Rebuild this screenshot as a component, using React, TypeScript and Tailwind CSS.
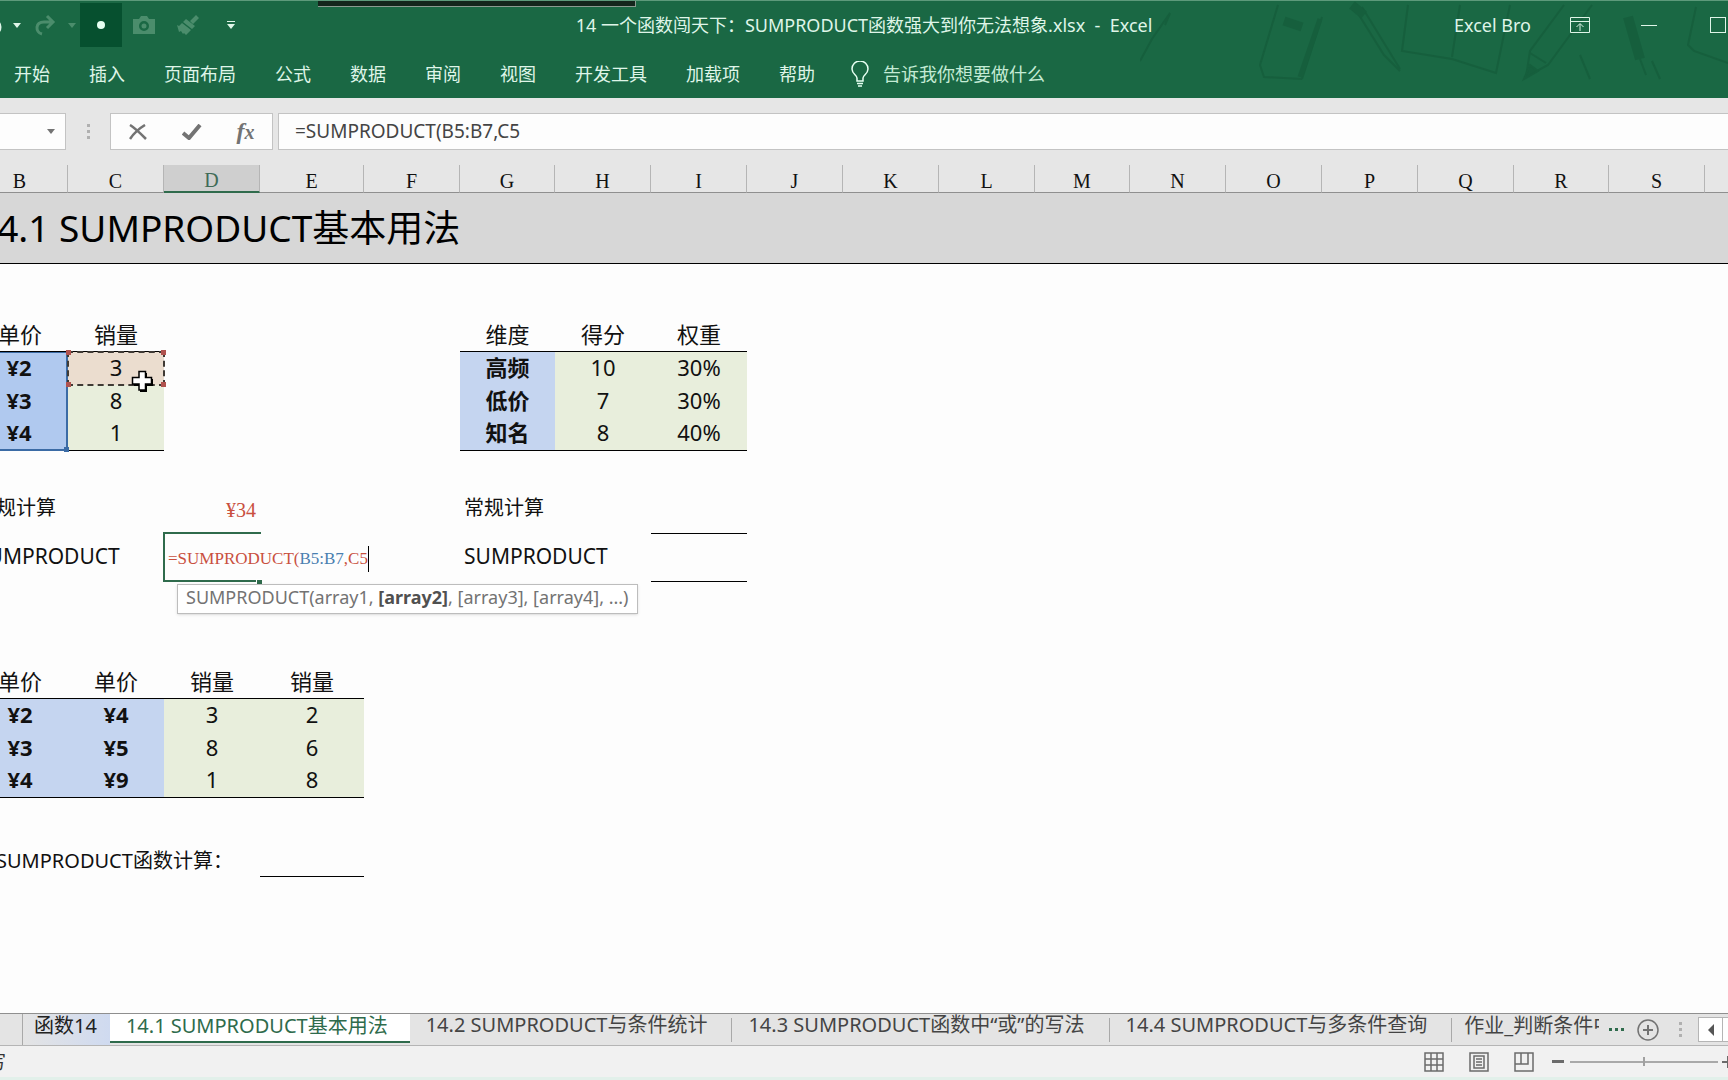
import { useState } from "react";
import type { ReactNode } from "react";
import clsx from "clsx";

const MENU = ["开始", "插入", "页面布局", "公式", "数据", "审阅", "视图", "开发工具", "加载项", "帮助"];

const COLUMNS = [
  { name: "B", width: "w-24" },
  { name: "C", width: "w-24" },
  { name: "D", width: "w-24" },
  { name: "E", width: "w-[104px]" },
  { name: "F", width: "w-24" },
  { name: "G", width: "w-[95px]" },
  { name: "H", width: "w-24" },
  { name: "I", width: "w-24" },
  { name: "J", width: "w-24" },
  { name: "K", width: "w-24" },
  { name: "L", width: "w-24" },
  { name: "M", width: "w-[95px]" },
  { name: "N", width: "w-24" },
  { name: "O", width: "w-24" },
  { name: "P", width: "w-24" },
  { name: "Q", width: "w-24" },
  { name: "R", width: "w-[95px]" },
  { name: "S", width: "w-24" },
];

const TABS = ["14.2 SUMPRODUCT与条件统计", "14.3 SUMPRODUCT函数中“或”的写法", "14.4 SUMPRODUCT与多条件查询"];

const BLUE = "bg-[#c5d5f0] font-bold";
const GREEN = "bg-[#e8eedc]";
const LINE = "border-b border-black";

function Caret({ className }: { className?: string }) {
  return (
    <svg viewBox="0 0 8 5" className={clsx("w-2 h-[5px]", className)} fill="currentColor">
      <path d="M0 0h8L4 5z" />
    </svg>
  );
}

function ToolButton({ label, className, children }: { label: string; className: string; children: ReactNode }) {
  return (
    <button aria-label={label} className={clsx("flex shrink-0 items-center justify-center", className)}>
      {children}
    </button>
  );
}

function Doodles() {
  return (
    <svg
      viewBox="0 0 588 98"
      className="pointer-events-none absolute right-0 top-0 h-[98px] w-[588px] opacity-60"
      fill="none"
      stroke="#145a39"
      strokeWidth="2"
    >
      <path d="M30 12l-18 26-12 22M30 12l-5 12" />
      <path d="M138 4l-18 60 4 12 38 2M182 16l-20 62" />
      <path d="M180 18l-20 58" strokeWidth="5" />
      <path d="M144 20l18 6" strokeWidth="9" />
      <path d="M222 6l38 62M214 6l30 48 16 16" />
      <path d="M212 4l12 10" strokeWidth="9" />
      <path d="M268 4l-6 46 50 8 44 14 14-68M320 4l-8 52" />
      <path d="M424 4l-34 46-4 26 22-12 44-60M390 52l16 10" />
      <path d="M384 78l6-14 8 6z" fill="#145a39" />
      <path d="M440 54l10 24" />
      <path d="M488 16l12 42" strokeWidth="10" />
      <path d="M500 58l6 16M512 60l8 18" />
      <path d="M556 6l-8 38 6 6 34 12" />
    </svg>
  );
}

function TitleBar() {
  return (
    <header className="relative overflow-hidden border-t border-[#5d9a7b] bg-[#1a6844] text-[#dff5e8]">
      <Doodles />
      <div className="absolute left-[318px] top-0 h-[6px] w-[318px] border-b border-r border-[#8a9a90] bg-[#14251c]" />
      <div className="relative grid h-12 grid-cols-[1fr_auto_1fr] items-center">
        <div className="flex min-w-0 items-center">
          <ToolButton label="撤消" className="-ml-7 h-11 w-9">
            <svg viewBox="0 0 24 24" className="h-6 w-6" fill="none" stroke="currentColor" strokeWidth="3">
              <path d="M3 4v7h7M4 11c4-6 18-5 18 3 0 4-3 7-7 7" />
            </svg>
          </ToolButton>
          <ToolButton label="撤消选项" className="h-11 w-[18px]">
            <Caret />
          </ToolButton>
          <ToolButton label="恢复" className="h-11 w-[38px] text-[#4b8d6c]">
            <svg viewBox="0 0 22 22" className="h-[22px] w-[22px]" fill="none" stroke="currentColor" strokeWidth="3">
              <path d="M13 2l6 6-6 6M19 8h-9c-9 0-9 10-2 12" />
            </svg>
          </ToolButton>
          <ToolButton label="恢复选项" className="h-11 w-4 text-[#4b8d6c]">
            <Caret />
          </ToolButton>
          <ToolButton label="圆点" className="h-11 w-[42px] bg-[#06502f]">
            <span className="h-2 w-2 rounded-full bg-[#e6fff2]" />
          </ToolButton>
          <ToolButton label="照相机" className="h-11 w-11 text-[#4b8d6c]">
            <svg viewBox="0 0 22 18" className="h-[18px] w-[22px]" fill="currentColor" fillRule="evenodd">
              <path d="M0 3h6l2-3h6l2 3h6v15H0zM11 5a5 5 0 1 0 0 10a5 5 0 1 0 0-10zM11 7.500a2.500 2.500 0 1 1 0 5a2.500 2.500 0 1 1 0-5z" />
            </svg>
          </ToolButton>
          <ToolButton label="格式刷" className="h-11 w-11 text-[#4b8d6c]">
            <svg viewBox="0 0 22 20" className="h-5 w-[22px]" fill="currentColor">
              <path d="M19 0l3 3-6 6-3-3zM9 4l9 7-3 3-9-7zM5 8l9 7-5 5-2-2-1 1-2-3-2 1-2-7 2 1z" />
            </svg>
          </ToolButton>
          <ToolButton label="自定义快速访问工具栏" className="h-11 w-[42px]">
            <svg viewBox="0 0 8 8" className="h-2 w-2" fill="currentColor">
              <path d="M0 0h8v1H0zM0 3h8L4 8z" />
            </svg>
          </ToolButton>
        </div>
        <h1 className="whitespace-pre text-lg leading-6">
          14 一个函数闯天下：SUMPRODUCT函数强大到你无法想象.xlsx  -  Excel
        </h1>
        <div className="-mr-6 flex min-w-0 items-center justify-end">
          <span className="mr-[14px] whitespace-nowrap text-lg leading-6">Excel Bro</span>
          <ToolButton label="功能区显示选项" className="h-11 w-[69px]">
            <svg viewBox="0 0 20 16" className="h-4 w-5" fill="none" stroke="currentColor">
              <path d="M.5.5h19v15H.5zM.5 4.500h19M10 14V7M6.500 10L10 6.500 13.500 10" />
            </svg>
          </ToolButton>
          <ToolButton label="最小化" className="h-11 w-[69px]">
            <span className="h-px w-4 bg-[#dff5e8]" />
          </ToolButton>
          <ToolButton label="最大化" className="h-11 w-[69px]">
            <span className="h-4 w-4 border border-[#dff5e8]" />
          </ToolButton>
        </div>
      </div>
      <nav className="relative flex h-[49px] items-center gap-[39px] pl-[14px] text-lg leading-6">
        {MENU.map((item) => (
          <button key={item} className="whitespace-nowrap">
            {item}
          </button>
        ))}
        <button className="-ml-[3px] flex items-center gap-[14px] whitespace-nowrap text-[#c4ebd5]">
          <svg viewBox="0 0 18 26" className="h-[26px] w-[18px]" fill="none" stroke="#e6fff2" strokeWidth="1.500">
            <path d="M6 20v-3c0-3-5-4-5-9a8 8 0 0 1 16 0c0 5-5 6-5 9v3zM6 22.500h6M7 25h4" />
          </svg>
          告诉我你想要做什么
        </button>
      </nav>
    </header>
  );
}

function FormulaBar({ value, onChange }: { value: string; onChange: (v: string) => void }) {
  return (
    <div className="flex h-[67px] items-start bg-[#e6e6e6] pt-[15px] text-[#737373]">
      <div className="flex h-[37px] w-[66px] items-center border border-l-0 border-[#c3c3c3] bg-[#fdfdfd]">
        <input aria-label="名称框" className="w-[43px] bg-transparent outline-none" />
        <button aria-label="名称框列表" className="p-1">
          <Caret />
        </button>
      </div>
      <div className="flex h-[37px] w-11 flex-col items-center justify-center gap-[3px]">
        <span className="h-[3px] w-[3px] bg-[#b0b0b0]" />
        <span className="h-[3px] w-[3px] bg-[#b0b0b0]" />
        <span className="h-[3px] w-[3px] bg-[#b0b0b0]" />
      </div>
      <div className="flex h-[37px] w-[163px] items-center border border-[#c3c3c3] bg-[#fdfdfd]">
        <ToolButton label="取消" className="h-full w-[54px]">
          <svg viewBox="0 0 18 16" className="h-4 w-[18px]" fill="none" stroke="currentColor" strokeWidth="2.500">
            <path d="M1 1c5 3 11 9 16 14M16 1C11 4 5 9 1 15" />
          </svg>
        </ToolButton>
        <ToolButton label="输入" className="h-full w-[54px]">
          <svg viewBox="0 0 20 16" className="h-4 w-5" fill="none" stroke="currentColor" strokeWidth="4">
            <path d="M1 9l6 5L18 1" />
          </svg>
        </ToolButton>
        <ToolButton label="插入函数" className="h-full w-[53px]">
          <span className="font-['Liberation_Serif',serif] text-2xl font-bold leading-6 italic">
            f<span className="text-xl">x</span>
          </span>
        </ToolButton>
      </div>
      <input
        aria-label="编辑栏"
        value={value}
        onChange={(e) => onChange(e.target.value)}
        className="ml-[5px] h-[37px] min-w-0 flex-1 border border-r-0 border-[#c3c3c3] bg-[#fdfdfd] pb-[2px] pl-4 text-[19px] leading-6 text-[#444] outline-none"
      />
    </div>
  );
}

function Cell({ className, span, children }: { className?: string; span?: number; children?: ReactNode }) {
  return (
    <td colSpan={span} className={clsx("px-0 pt-0 whitespace-nowrap", className)}>
      {children}
    </td>
  );
}

// Dashed box round the reference that is being pointed at
function PointedRange() {
  return (
    <div className="absolute -inset-x-px -top-[1px] -bottom-px border-2 border-dashed border-[#3f3a35]">
      <span className="absolute -left-[3px] -top-[3px] h-[5px] w-[5px] bg-[#b0524e]" />
      <span className="absolute -right-[3px] -top-[3px] h-[5px] w-[5px] bg-[#b0524e]" />
      <span className="absolute -bottom-[3px] -left-[3px] h-[5px] w-[5px] bg-[#b0524e]" />
      <span className="absolute -bottom-[3px] -right-[3px] h-[5px] w-[5px] bg-[#b0524e]" />
      <svg viewBox="0 0 22 22" className="absolute -bottom-2 right-[10px] h-[22px] w-[22px]">
        <path d="M9 3h7v6h6v7h-6v6H9v-6H3V9h6z" fill="#000" />
        <path d="M8 1.500h6.500v6h6V14h-6v6H8v-6H1.500V7.500H8z" fill="#fff" stroke="#000" strokeWidth="1.500" />
      </svg>
    </div>
  );
}

function ActiveCell() {
  return (
    <div className="absolute -left-px -top-[2px] bottom-0 w-[98px] border-y-2 border-l-2 border-[#2f6b4c]">
      <span className="absolute -bottom-1 -right-px h-[5px] w-[6px] border-l border-t border-white bg-[#2f6b4c]" />
      <div className="flex h-full w-max items-center bg-[#fdfdfd] pl-[3px] pt-1 font-['Liberation_Serif',serif] text-[17px] leading-6 text-[#c9503f]">
        <span>=SUMPRODUCT(</span>
        <span className="text-[#4a7fb0]">B5:B7</span>
        <span>,C5</span>
        <span className="h-[26px] w-px bg-black" />
      </div>
      <div className="absolute left-3 top-[50px] z-10 w-max border border-[#bdbdbd] bg-white px-2 pb-1 text-lg leading-6 text-[#737373] shadow">
        SUMPRODUCT(array1, <b className="text-[#505050]">[array2]</b>, [array3], [array4], ...)
      </div>
    </div>
  );
}

function Sheet() {
  const prices = ["¥2", "¥3", "¥4"];
  const sales = ["3", "8", "1"];
  const scores = [
    ["高频", "10", "30%"],
    ["低价", "7", "30%"],
    ["知名", "8", "40%"],
  ];
  const wide = [
    ["¥2", "¥4", "3", "2"],
    ["¥3", "¥5", "8", "6"],
    ["¥4", "¥9", "1", "8"],
  ];

  return (
    <main className="flex-1 overflow-hidden bg-[#fdfdfd]">
      <div className="-ml-7">
        <table className="w-full table-fixed border-separate border-spacing-0 text-center text-[22px] leading-6 text-[#111]">
          <thead>
            <tr className="h-7 bg-[#e6e6e6] font-['Liberation_Serif',serif] text-xl leading-5">
              {COLUMNS.map(({ name, width }) => (
                <th
                  key={name}
                  scope="col"
                  className={clsx(
                    "border-b border-r p-0 pt-1 font-normal",
                    width,
                    name === "D" ? "border-b-2 border-b-[#2f6b4c] border-r-[#b5b5b5] bg-[#cfcfcf] text-[#3f6b57]" : "border-b-[#8f8f8f] border-r-[#b5b5b5]",
                  )}
                >
                  {name}
                </th>
              ))}
              <th className="border-b border-b-[#8f8f8f] p-0" />
            </tr>
          </thead>
          <tbody>
            <tr className="h-[71px] bg-[#d7d7d7] text-black">
              <Cell span={19} className={clsx(LINE, "pb-0 pl-1 text-left text-[37px] leading-[64px]")}>14.1 SUMPRODUCT基本用法</Cell>
            </tr>
            <tr className="h-14" />
            <tr className="h-8">
              <Cell className={clsx(LINE, "pb-1")}>单价</Cell>
              <Cell className={clsx(LINE, "pb-1")}>销量</Cell>
              <Cell span={3} />
              {["维度", "得分", "权重"].map((t) => (
                <Cell key={t} className={clsx(LINE, "pb-1")}>{t}</Cell>
              ))}
            </tr>
            {prices.map((price, i) => (
              <tr key={price} className="h-[33px]">
                <Cell
                  className={clsx(
                    "relative border-r-2 border-[#3b6ba5] bg-[#b0c9ef] pb-1 font-bold",
                    i === 0 && "border-t",
                    i === 2 && "border-b-2",
                  )}
                >
                  {price}
                  {i === 2 && <span className="absolute -bottom-[3px] -right-[3px] h-[5px] w-[5px] bg-[#3b6ba5]" />}
                </Cell>
                <Cell className={clsx("pb-1", i === 0 ? "relative z-10 bg-[#ebddcf]" : GREEN, i === 2 && LINE)}>
                  {sales[i]}
                  {i === 0 && <PointedRange />}
                </Cell>
                <Cell span={3} />
                {scores[i].map((v, j) => (
                  <Cell key={j} className={clsx("pb-1", j === 0 ? BLUE : GREEN, i === 2 && LINE)}>{v}</Cell>
                ))}
              </tr>
            ))}
            <tr className="h-[35px]" />
            <tr className="h-12">
              <Cell span={2} className="pb-1 pl-1 text-left text-xl leading-6">常规计算</Cell>
              <Cell className="pr-1 text-right font-['Liberation_Serif',serif] text-xl leading-6 text-[#c9503f]">¥34</Cell>
              <Cell span={2} />
              <Cell span={2} className="pb-1 pl-1 text-left text-xl leading-6">常规计算</Cell>
              <Cell className={LINE} />
            </tr>
            <tr className="h-12">
              <Cell span={2} className="pb-1 pl-1 text-left text-[21px] leading-6">SUMPRODUCT</Cell>
              <Cell className="relative">
                <ActiveCell />
              </Cell>
              <Cell span={2} />
              <Cell span={2} className="pb-1 pl-1 text-left text-[21px] leading-6">SUMPRODUCT</Cell>
              <Cell className={LINE} />
            </tr>
            <tr className="h-[85px]" />
            <tr className="h-8">
              {["单价", "单价", "销量", "销量"].map((t, i) => (
                <Cell key={i} className={clsx(LINE, "pb-1")}>{t}</Cell>
              ))}
            </tr>
            {wide.map((row, i) => (
              <tr key={i} className="h-[33px]">
                {row.map((v, j) => (
                  <Cell key={j} className={clsx("pb-1", j < 2 ? BLUE : GREEN, i === 2 && LINE)}>{v}</Cell>
                ))}
              </tr>
            ))}
            <tr className="h-[31px]" />
            <tr className="h-12">
              <Cell span={3} className="pl-1 text-left text-xl leading-6">
                <div className="pt-4">用SUMPRODUCT函数计算：</div>
              </Cell>
              <Cell className={LINE} />
            </tr>
          </tbody>
        </table>
      </div>
    </main>
  );
}

function TabBar() {
  return (
    <div className="flex h-[33px] shrink-0 border-y border-y-[#b5b5b5] border-t-[#8f8f8f] bg-[#e4e4e4] text-xl leading-6 text-[#444]">
      <div role="tablist" className="flex min-w-0 flex-1 items-start overflow-hidden whitespace-nowrap">
        <button role="tab" className="ml-[22px] h-[31px] shrink-0 border-l border-[#a9a9a9] bg-linear-to-r from-[#e4e4e4] to-[#cfdaf0] pl-[11px] pr-[13px] pb-2 text-[#222]">
          函数14
        </button>
        <button role="tab" aria-selected className="h-[29px] shrink-0 border-b-2 border-[#2f6b4c] bg-white pl-4 pr-[22px] pb-[5px] text-[#2f6b4c]">
          14.1 SUMPRODUCT基本用法
        </button>
        {TABS.map((tab) => (
          <button role="tab" key={tab} className="flex h-7 shrink-0 items-end">
            <span className="-mt-1 block self-start pl-4 pr-6 pt-[3px]">{tab}</span>
            <span className="h-6 w-px bg-[#a9a9a9]" />
          </button>
        ))}
        <button role="tab" className="h-[31px] min-w-0 overflow-hidden pb-2 pl-3 text-left">作业_判断条件中的应用</button>
      </div>
      <button aria-label="更多工作表" className="flex w-[34px] items-center justify-center gap-[3px]">
        <span className="h-[3px] w-[3px] bg-[#2f6b4c]" />
        <span className="h-[3px] w-[3px] bg-[#2f6b4c]" />
        <span className="h-[3px] w-[3px] bg-[#2f6b4c]" />
      </button>
      <button aria-label="新工作表" className="flex w-[30px] items-center justify-center">
        <svg viewBox="0 0 22 22" className="h-[22px] w-[22px]" fill="none" stroke="#737373" strokeWidth="1.500">
          <circle cx="11" cy="11" r="10" />
          <path d="M6 11h10M11 6v10" strokeWidth="2" />
        </svg>
      </button>
      <div className="flex w-[35px] flex-col items-center justify-center gap-[3px]">
        <span className="h-[3px] w-[3px] bg-[#b0b0b0]" />
        <span className="h-[3px] w-[3px] bg-[#b0b0b0]" />
        <span className="h-[3px] w-[3px] bg-[#b0b0b0]" />
      </div>
      <button aria-label="向左滚动" className="my-[3px] flex w-[25px] items-center justify-center border border-[#b5b5b5] bg-white text-[#555]">
        <svg viewBox="0 0 6 12" className="h-3 w-[6px]" fill="currentColor">
          <path d="M6 0v12L0 6z" />
        </svg>
      </button>
      <div className="my-[3px] w-[5px] border-y border-[#b5b5b5] bg-white" />
    </div>
  );
}

function StatusBar() {
  const [zoom, setZoom] = useState(50);
  return (
    <footer className="flex h-[34px] shrink-0 items-center justify-between overflow-hidden border-b-[3px] border-[#e2f0ea] bg-[#f1f1f1] text-[#6b6b6b]">
      <span className="-ml-3 text-lg leading-6 text-[#333]">写</span>
      <div className="-mr-[6px] flex items-center">
        <button aria-label="普通" className="mr-[25px]">
          <svg viewBox="0 0 20 20" className="h-5 w-5" fill="none" stroke="currentColor" strokeWidth="1.500">
            <path d="M1 1h18v18H1zM1 7h18M1 13h18M7 1v18M13 1v18" />
          </svg>
        </button>
        <button aria-label="页面布局视图" className="mr-[25px]">
          <svg viewBox="0 0 20 20" className="h-5 w-5" fill="none" stroke="currentColor" strokeWidth="1.500">
            <path d="M1 1h18v18H1zM5 4h10v12H5zM7 7h6M7 10h6M7 13h6" />
          </svg>
        </button>
        <button aria-label="分页预览" className="mr-[18px]">
          <svg viewBox="0 0 20 20" className="h-5 w-5" fill="none" stroke="currentColor" strokeWidth="1.500">
            <path d="M1 1h18v18H1zM1 12h13V1M7 1v11" />
          </svg>
        </button>
        <button aria-label="缩小" className="flex h-5 w-[14px] items-center">
          <span className="h-[3px] w-3 bg-[#6b6b6b]" />
        </button>
        <input
          type="range"
          aria-label="显示比例"
          value={zoom}
          onChange={(e) => setZoom(Number(e.target.value))}
          className="mx-1 h-[2px] w-[148px] appearance-none bg-[#a9a9a9] [&::-webkit-slider-thumb]:h-[9px] [&::-webkit-slider-thumb]:w-[2px] [&::-webkit-slider-thumb]:appearance-none [&::-webkit-slider-thumb]:bg-[#a0a0a0]"
        />
        <button aria-label="放大">
          <svg viewBox="0 0 12 12" className="h-3 w-3" fill="none" stroke="currentColor" strokeWidth="2">
            <path d="M0 6h12M6 0v12" />
          </svg>
        </button>
      </div>
    </footer>
  );
}

export default function App() {
  const [formula, setFormula] = useState("=SUMPRODUCT(B5:B7,C5");

  return (
    <div className="flex min-h-screen flex-col overflow-hidden bg-[#fdfdfd] font-['Noto_Sans','Noto_Sans_CJK_SC',sans-serif]">
      <TitleBar />
      <FormulaBar value={formula} onChange={setFormula} />
      <Sheet />
      <TabBar />
      <StatusBar />
    </div>
  );
}
